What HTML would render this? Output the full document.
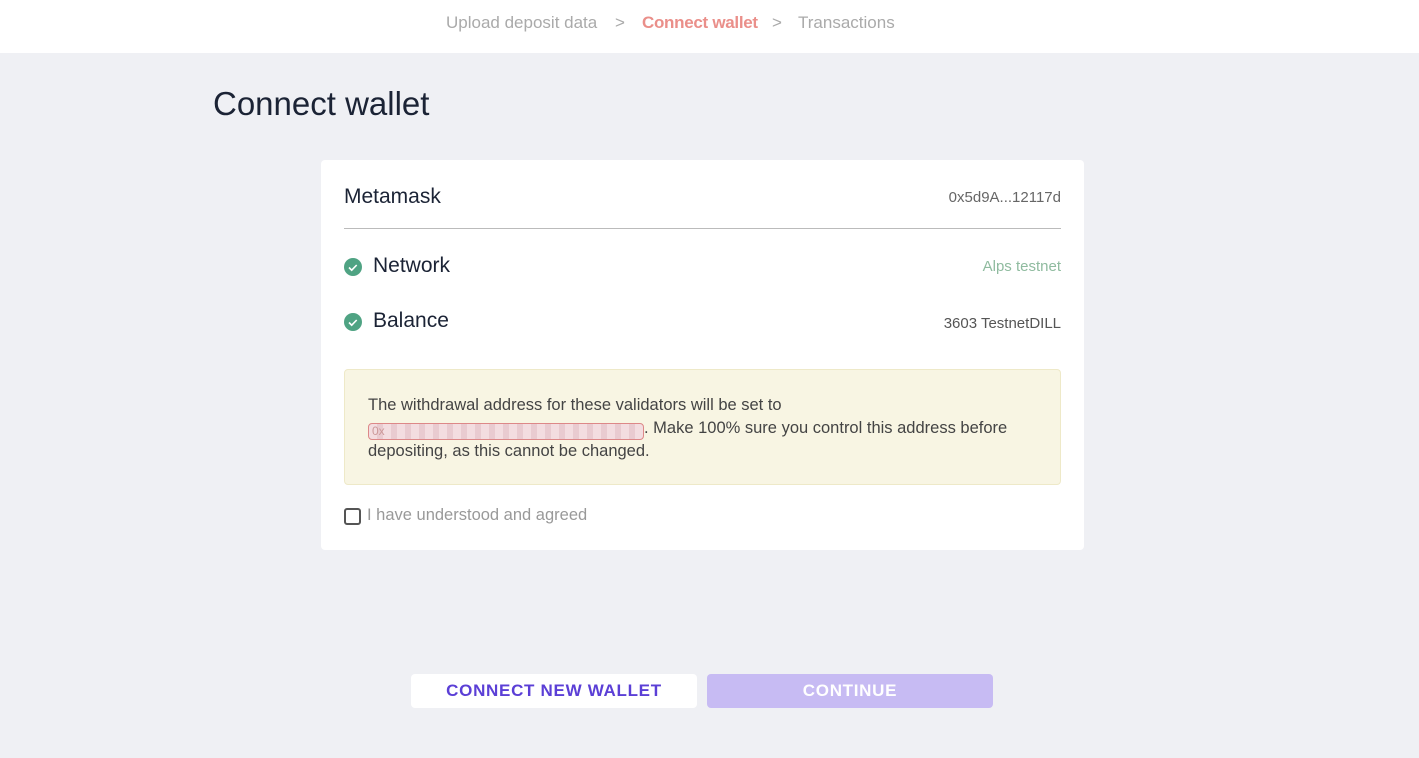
<!DOCTYPE html>
<html><head><style>
*{box-sizing:border-box;margin:0;padding:0}
body{width:1419px;height:758px;background:#eff0f4;font-family:"Liberation Sans",sans-serif;position:relative;overflow:hidden}
.top{position:absolute;left:0;top:0;width:1419px;height:53px;background:#fff}
.crumb{position:absolute;top:13px;font-size:17px;color:#aaa}
h1{position:absolute;left:213px;top:85px;font-size:33px;font-weight:normal;color:#1b2335}
.card{position:absolute;left:321px;top:160px;width:763px;height:390px;background:#fff;border-radius:4px}
.abs{position:absolute}
.lbl{font-size:21px;color:#1b2335}
.val{font-size:15px;right:23px}
.chk{width:18px;height:18px;border-radius:50%;background:#4fa383}
.warn{position:absolute;left:23px;top:209px;width:717px;height:116px;background:#f8f5e3;border:1px solid #eee9c8;border-radius:4px;padding:24px 23px;font-size:16.5px;line-height:23px;color:#444}
.addr{display:inline-block;width:276px;height:17px;border:1px solid #d88;border-radius:4px;background:repeating-linear-gradient(90deg,#f3dde0 0 8px,#e9cbd0 8px 14px);font-size:12px;line-height:15px;color:#c99;padding-left:3px;vertical-align:-2px}
.btn{position:absolute;top:674px;height:34px;border-radius:4px;font-size:17px;font-weight:bold;letter-spacing:0.7px;text-align:center;line-height:34px}
</style></head><body>
<div class="top"></div>
<div class="crumb" style="left:446px">Upload deposit data</div>
<div class="crumb" style="left:615px">&gt;</div>
<div class="crumb" style="left:642px;color:#ea8f8a;font-weight:bold;letter-spacing:-0.3px">Connect wallet</div>
<div class="crumb" style="left:772px">&gt;</div>
<div class="crumb" style="left:798px">Transactions</div>
<h1>Connect wallet</h1>
<div class="card">
<div class="abs lbl" style="left:23px;top:25px">Metamask</div>
<div class="abs val" style="top:29px;color:#666">0x5d9A...12117d</div>
<div class="abs" style="left:23px;top:68px;width:717px;height:1px;background:#bbb"></div>
<div class="abs chk" style="left:23px;top:98px"><svg width="18" height="18"><path d="M5 9.5l2.7 2.7 5-5.2" stroke="#fff" stroke-width="1.6" fill="none"/></svg></div>
<div class="abs lbl" style="left:52px;top:94px">Network</div>
<div class="abs val" style="top:98px;color:#8fbb9f">Alps testnet</div>
<div class="abs chk" style="left:23px;top:153px"><svg width="18" height="18"><path d="M5 9.5l2.7 2.7 5-5.2" stroke="#fff" stroke-width="1.6" fill="none"/></svg></div>
<div class="abs lbl" style="left:52px;top:149px">Balance</div>
<div class="abs val" style="top:155px;color:#555">3603 TestnetDILL</div>
<div class="warn">The withdrawal address for these validators will be set to<br><span class="addr">0x</span>. Make 100% sure you control this address before depositing, as this cannot be changed.</div>
<div class="abs" style="left:23px;top:348px;width:17px;height:17px;border:2px solid #555;border-radius:3px"></div>
<div class="abs" style="left:46px;top:346px;font-size:16.5px;color:#999">I have understood and agreed</div>
</div>
<div class="btn" style="left:411px;width:286px;background:#fff;color:#5b3fd6">CONNECT NEW WALLET</div>
<div class="btn" style="left:707px;width:286px;background:#c7bbf3;color:#fff">CONTINUE</div>
</body></html>
